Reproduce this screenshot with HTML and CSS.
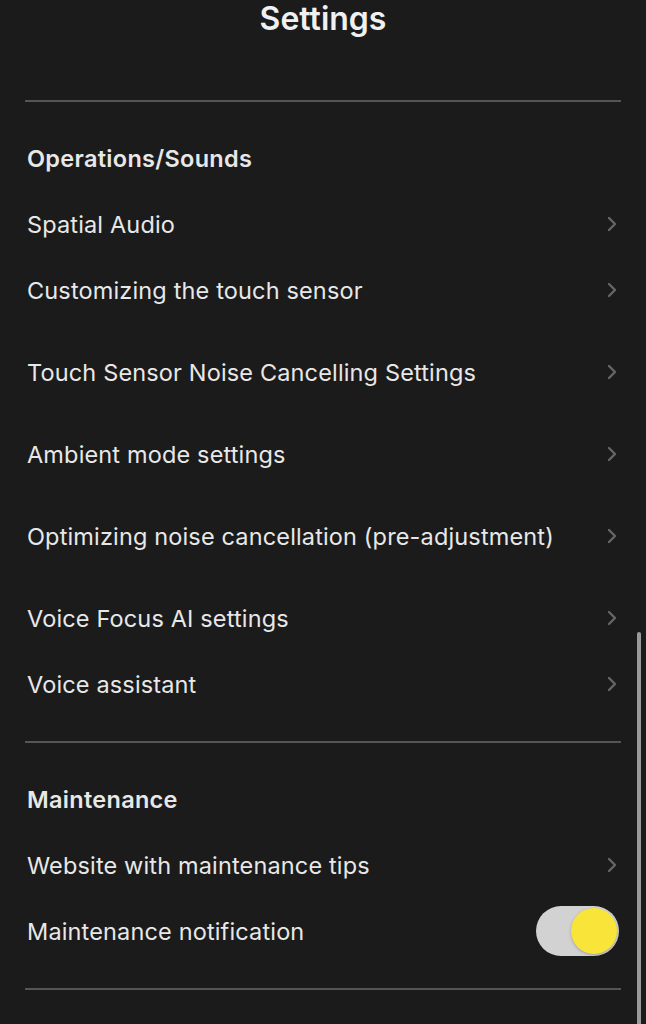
FILE: index.html
```
<!DOCTYPE html>
<html lang="en">
  <head>
    <meta charset="UTF-8" />
    <meta name="viewport" content="width=device-width, initial-scale=1.0" />
    <title>Settings</title>
    <link rel="stylesheet" href="styles.css">
  </head>
  <body>
    <div class="screen">
      <h1 class="title">Settings</h1>
      <hr class="divider" />

      <section class="group">
        <div class="group-head">Operations/Sounds</div>
        <div class="row">
          <span>Spatial Audio</span>
          <svg class="chevron" viewBox="0 0 10 16"><path d="M2 2 L8 8 L2 14" /></svg>
        </div>
        <div class="row">
          <span>Customizing the touch sensor</span>
          <svg class="chevron" viewBox="0 0 10 16"><path d="M2 2 L8 8 L2 14" /></svg>
        </div>
        <div class="row spaced">
          <span>Touch Sensor Noise Cancelling Settings</span>
          <svg class="chevron" viewBox="0 0 10 16"><path d="M2 2 L8 8 L2 14" /></svg>
        </div>
        <div class="row spaced">
          <span>Ambient mode settings</span>
          <svg class="chevron" viewBox="0 0 10 16"><path d="M2 2 L8 8 L2 14" /></svg>
        </div>
        <div class="row spaced">
          <span>Optimizing noise cancellation (pre-adjustment)</span>
          <svg class="chevron" viewBox="0 0 10 16"><path d="M2 2 L8 8 L2 14" /></svg>
        </div>
        <div class="row spaced">
          <span>Voice Focus AI settings</span>
          <svg class="chevron" viewBox="0 0 10 16"><path d="M2 2 L8 8 L2 14" /></svg>
        </div>
        <div class="row">
          <span>Voice assistant</span>
          <svg class="chevron" viewBox="0 0 10 16"><path d="M2 2 L8 8 L2 14" /></svg>
        </div>
      </section>

      <hr class="divider" />

      <section class="group">
        <div class="group-head">Maintenance</div>
        <div class="row">
          <span>Website with maintenance tips</span>
          <svg class="chevron" viewBox="0 0 10 16"><path d="M2 2 L8 8 L2 14" /></svg>
        </div>
        <div class="row">
          <span>Maintenance notification</span>
          <div class="toggle on"><div class="knob"></div></div>
        </div>
      </section>

      <hr class="divider" />

      <div class="scrollbar"></div>
    </div>
  </body>
</html>
```

FILE: styles.css
```
body {
  margin: 0;
  background: #1b1b1b;
  font-family: Inter, "Noto Sans", sans-serif;
  color: #e8e8e8;
}
.screen {
  position: relative;
  height: 1024px;
  overflow: hidden;
}
.title {
  margin: 0;
  font-size: 32px;
  font-weight: 600;
  line-height: 38px;
  text-align: center;
  color: #f0f0f0;
}
.divider {
  margin: 62px 25px 0;
  border: none;
  height: 2px;
  background: #555555;
}
.group {
  padding: 23px 0 24px;
}
.group + .divider {
  margin-top: 0;
}
.group-head,
.row {
  height: 66px;
  display: flex;
  align-items: center;
  padding: 0 28px 0 27px;
  font-size: 23.5px;
  letter-spacing: 0.15px;
}
.group-head {
  font-weight: 600;
  letter-spacing: 0.3px;
}
.row {
  justify-content: space-between;
}
.row.spaced {
  margin-top: 16px;
}
.chevron {
  width: 10px;
  height: 16px;
  margin-right: 1px;
  fill: none;
  stroke: #666666;
  stroke-width: 2.4;
  stroke-linecap: round;
  stroke-linejoin: round;
}
.toggle {
  width: 83px;
  height: 50px;
  margin-right: -1px;
  border-radius: 25px;
  background: #d2d2d2;
  display: flex;
  align-items: center;
  justify-content: flex-end;
  padding: 0 2px;
  box-sizing: border-box;
}
.knob {
  width: 46px;
  height: 46px;
  border-radius: 50%;
  background: #f9e43a;
  box-shadow: 0 1px 3px rgba(0, 0, 0, 0.25);
}
.scrollbar {
  position: absolute;
  right: 5px;
  top: 632px;
  width: 4px;
  height: 400px;
  border-radius: 2px;
  background: #9a9a9a;
}
```
